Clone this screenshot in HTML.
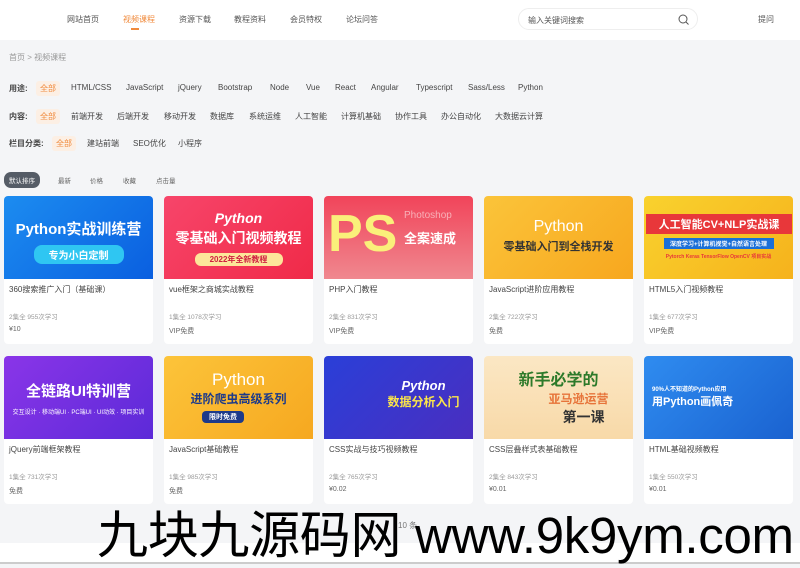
<!DOCTYPE html><html><head><meta charset="utf-8"><style>
*{margin:0;padding:0;box-sizing:border-box}
body{width:800px;height:564px;overflow:hidden;background:#f4f5f7;font-family:"Liberation Sans","Noto Sans CJK SC",sans-serif;font-size:8px;color:#333;position:relative}
.top{position:absolute;left:0;top:0;width:800px;height:40px;background:#fff}
.nav span{position:absolute;top:14px;font-size:8px;color:#555}
.srch{position:absolute;left:518px;top:8px;width:180px;height:22px;border:1px solid #eee;border-radius:11px;font-size:8px;color:#555;padding:6px 9px}
.a{position:absolute;font-size:8px;color:#444;white-space:nowrap}
.on{color:#f08a3c;background:#fcefe4;padding:3px 4px;border-radius:3px}
.card{position:absolute;width:149px;background:#fff;border-radius:4px;overflow:hidden}
.img{height:83px;position:relative;overflow:hidden;color:#fff;font-weight:bold;text-align:center}
.t{position:absolute;left:5px;top:88px;font-size:8px;color:#444}
.m{position:absolute;left:5px;top:115px;font-size:6.5px;color:#999}
.p{position:absolute;left:5px;top:130px;font-size:7px;color:#666}
.wm{position:absolute;left:97px;top:494px;font-size:51px;color:#000;white-space:nowrap;letter-spacing:-0.3px;z-index:5}
</style></head><body>
<div class="top"></div>
<div class="nav"><span style="left:67px">网站首页</span><span style="left:123px;color:#f08a3c">视频课程</span><span style="left:179px">资源下载</span><span style="left:234px">教程资料</span><span style="left:290px">会员特权</span><span style="left:346px">论坛问答</span><span style="left:758px">提问</span></div>
<div style="position:absolute;left:131px;top:28px;width:8px;height:2px;background:#f08a3c"></div>
<div class="srch">输入关键词搜索<svg style="position:absolute;right:8px;top:5px" width="11" height="11" viewBox="0 0 11 11"><circle cx="5" cy="5" r="4" fill="none" stroke="#555" stroke-width="1"/><path d="M8 8l2.5 2.5" stroke="#555"/></svg></div>
<div class="a" style="left:9px;top:52px;color:#999">首页 &gt; 视频课程</div>
<div class="a" style="left:9px;top:83px;font-weight:bold">用途:</div>
<div class="a" style="left:36px;top:83px"><span class="on">全部</span></div>
<div class="a" style="left:71px;top:83px">HTML/CSS</div><div class="a" style="left:126px;top:83px">JavaScript</div><div class="a" style="left:178px;top:83px">jQuery</div><div class="a" style="left:218px;top:83px">Bootstrap</div><div class="a" style="left:270px;top:83px">Node</div><div class="a" style="left:306px;top:83px">Vue</div><div class="a" style="left:335px;top:83px">React</div><div class="a" style="left:371px;top:83px">Angular</div><div class="a" style="left:416px;top:83px">Typescript</div><div class="a" style="left:468px;top:83px">Sass/Less</div><div class="a" style="left:518px;top:83px">Python</div>
<div class="a" style="left:9px;top:111px;font-weight:bold">内容:</div>
<div class="a" style="left:36px;top:111px"><span class="on">全部</span></div>
<div class="a" style="left:71px;top:111px">前端开发</div><div class="a" style="left:117px;top:111px">后端开发</div><div class="a" style="left:164px;top:111px">移动开发</div><div class="a" style="left:210px;top:111px">数据库</div><div class="a" style="left:249px;top:111px">系统运维</div><div class="a" style="left:295px;top:111px">人工智能</div><div class="a" style="left:341px;top:111px">计算机基础</div><div class="a" style="left:395px;top:111px">协作工具</div><div class="a" style="left:441px;top:111px">办公自动化</div><div class="a" style="left:495px;top:111px">大数据云计算</div>
<div class="a" style="left:9px;top:138px;font-weight:bold">栏目分类:</div>
<div class="a" style="left:52px;top:138px"><span class="on">全部</span></div>
<div class="a" style="left:87px;top:138px">建站前端</div><div class="a" style="left:133px;top:138px">SEO优化</div><div class="a" style="left:178px;top:138px">小程序</div>
<div class="a" style="left:4px;top:172px;background:#555c66;color:#fff;font-size:6.5px;padding:3px 5px;border-radius:7px">默认排序</div>
<div class="a" style="left:58px;top:175px;font-size:6.5px;color:#666">最新</div><div class="a" style="left:90px;top:175px;font-size:6.5px;color:#666">价格</div><div class="a" style="left:123px;top:175px;font-size:6.5px;color:#666">收藏</div><div class="a" style="left:156px;top:175px;font-size:6.5px;color:#666">点击量</div>

<div class="card" style="left:4px;top:196px;height:148px"><div class="img" style="background:linear-gradient(135deg,#1c8cf0,#0a5fe0)"><div style="font-size:15px;margin-top:22px">Python实战训练营</div><div style="margin:6px auto;width:90px;background:#2fc6f2;border-radius:8px;font-size:10px;padding:2px">专为小白定制</div></div><div class="t">360搜索推广入门（基础课）</div><div class="m">2集全 955次学习</div><div class="p">¥10</div></div>
<div class="card" style="left:164px;top:196px;height:148px"><div class="img" style="background:linear-gradient(135deg,#f7456a,#f02a48)"><div style="font-size:14px;margin-top:14px;font-style:italic">Python</div><div style="font-size:14px;margin-top:2px">零基础入门视频教程</div><div style="margin:5px auto;width:88px;background:#fde69a;color:#d02040;border-radius:6px;font-size:8px;padding:1px">2022年全新教程</div></div><div class="t">vue框架之商城实战教程</div><div class="m">1集全 1078次学习</div><div class="p">VIP免费</div></div>
<div class="card" style="left:324px;top:196px;height:148px"><div class="img" style="background:linear-gradient(180deg,#f1445a,#f0888f)"><div style="position:absolute;left:4px;top:8px;font-size:52px;color:#faf07a;line-height:60px">PS</div><div style="position:absolute;left:80px;top:32px;font-size:13px">全案速成</div><div style="position:absolute;left:80px;top:14px;font-size:10px;color:#f8b0b8;font-weight:normal">Photoshop</div></div><div class="t">PHP入门教程</div><div class="m">2集全 831次学习</div><div class="p">VIP免费</div></div>
<div class="card" style="left:484px;top:196px;height:148px"><div class="img" style="background:linear-gradient(135deg,#fbc43a,#f7a71e)"><div style="font-size:16px;margin-top:22px;font-weight:normal">Python</div><div style="font-size:11px;margin-top:2px;color:#333">零基础入门到全栈开发</div></div><div class="t">JavaScript进阶应用教程</div><div class="m">2集全 722次学习</div><div class="p">免费</div></div>
<div class="card" style="left:644px;top:196px;height:148px"><div class="img" style="background:linear-gradient(135deg,#f9d22e,#f6b21c)"><div style="font-size:11px;margin-top:18px;background:#e8373a;width:146px;margin-left:2px;padding:2px 0">人工智能CV+NLP实战课</div><div style="font-size:6px;margin:4px auto;background:#1a6fd8;width:110px;padding:1px">深度学习+计算机视觉+自然语言处理</div><div style="font-size:5px;margin-top:4px;color:#e8373a">Pytorch Keras TensorFlow OpenCV 项目实战</div></div><div class="t">HTML5入门视频教程</div><div class="m">1集全 677次学习</div><div class="p">VIP免费</div></div>

<div class="card" style="left:4px;top:356px;height:148px"><div class="img" style="background:linear-gradient(135deg,#8a35e8,#5c2ad8)"><div style="font-size:15px;margin-top:24px">全链路UI特训营</div><div style="font-size:6px;margin-top:6px;font-weight:normal">交互设计 · 移动端UI · PC端UI · UI动效 · 项目实训</div></div><div class="t">jQuery前端框架教程</div><div class="m">1集全 731次学习</div><div class="p">免费</div></div>
<div class="card" style="left:164px;top:356px;height:148px"><div class="img" style="background:linear-gradient(135deg,#fcc43a,#f6a820)"><div style="font-size:17px;margin-top:14px;font-weight:normal;color:#fff">Python</div><div style="font-size:12px;color:#1d3a8a">进阶爬虫高级系列</div><div style="margin:4px 0 0 38px;width:42px;background:#1d3a8a;border-radius:4px;font-size:7px;padding:1px">限时免费</div></div><div class="t">JavaScript基础教程</div><div class="m">1集全 985次学习</div><div class="p">免费</div></div>
<div class="card" style="left:324px;top:356px;height:148px"><div class="img" style="background:linear-gradient(135deg,#2a3fd8,#4a2ec0)"><div style="font-size:13px;margin-top:22px;margin-left:50px;font-style:italic">Python</div><div style="font-size:12px;margin-left:50px;color:#fbe54a">数据分析入门</div></div><div class="t">CSS实战与技巧视频教程</div><div class="m">2集全 765次学习</div><div class="p">¥0.02</div></div>
<div class="card" style="left:484px;top:356px;height:148px"><div class="img" style="background:linear-gradient(180deg,#fbe7c4,#f8d9a8)"><div style="font-size:16px;margin-top:10px;color:#2d7a2a">新手必学的</div><div style="font-size:12px;margin-left:40px;color:#e7743a">亚马逊运营</div><div style="font-size:14px;margin-left:50px;color:#333">第一课</div></div><div class="t">CSS层叠样式表基础教程</div><div class="m">2集全 843次学习</div><div class="p">¥0.01</div></div>
<div class="card" style="left:644px;top:356px;height:148px"><div class="img" style="background:linear-gradient(135deg,#2f8cf0,#1a62d0)"><div style="font-size:6px;margin-top:28px;text-align:left;padding-left:8px">90%人不知道的Python应用</div><div style="font-size:11px;text-align:left;padding-left:8px">用Python画佩奇</div></div><div class="t">HTML基础视频教程</div><div class="m">1集全 550次学习</div><div class="p">¥0.01</div></div>

<div class="a" style="left:398px;top:520px;color:#777">10 条</div>
<div style="position:absolute;left:0;top:543px;width:800px;height:21px;background:#fff;border-bottom:2px solid #ccc"></div>
<div class="wm">九块九源码网 www.9k9ym.com</div>
</body></html>
